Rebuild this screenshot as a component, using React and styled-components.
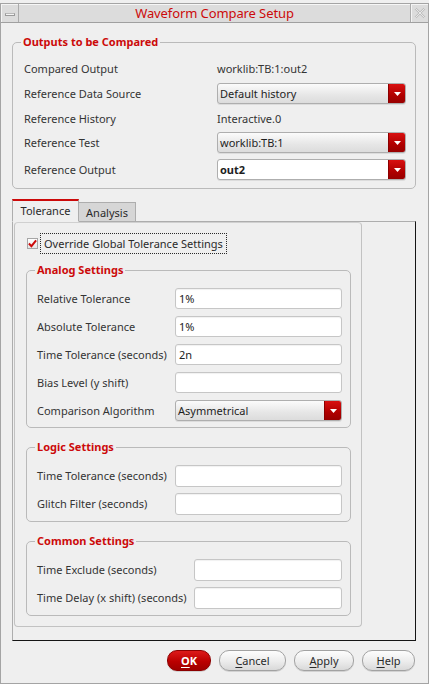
import React from "react";
import styled, { createGlobalStyle } from "styled-components";

const GlobalStyle = createGlobalStyle`
  html, body { margin: 0; padding: 0; background: #efefef; }
  body {
    font-family: "Noto Sans", "Open Sans", sans-serif;
    font-size: 11px;
    color: #343434;
  }
  * { box-sizing: border-box; }
`;

const RED = "#cc0a0a";

const Window = styled.div`
  width: 429px;
  height: 681px;
  margin-top: 3px;
  border: 1px solid #a4a4a4;
  background: #efefef;
  display: flex;
  flex-direction: column;
`;

const TitleBar = styled.div`
  height: 19px;
  display: flex;
  background: #dcdcdc;
  border-bottom: 1px solid #a0a0a0;
  box-shadow: inset 0 1px 0 #f6f6f6;
`;

const TitleButton = styled.div`
  width: 18px;
  flex: none;
  display: flex;
  align-items: center;
  justify-content: center;
  border-right: ${(p) => (p.$side === "left" ? "1px solid #ababab" : "none")};
  border-left: ${(p) => (p.$side === "right" ? "1px solid #ababab" : "none")};
  box-shadow: inset 1px 1px 0 #f4f4f4;
`;

const MinBar = styled.div`
  width: 10px;
  height: 3px;
  margin-top: 2px;
  background: #f4f4f4;
  border: 1px solid #9a9a9a;
  border-top-color: #b8b8b8;
`;

const TitleText = styled.div`
  flex: 1;
  text-align: center;
  color: ${RED};
  font-size: 13px;
  letter-spacing: -0.1px;
  line-height: 19px;
`;

const Body = styled.div`
  flex: 1;
  display: flex;
  flex-direction: column;
  padding: 19px 12px 0 11px;
`;

const Group = styled.div`
  position: relative;
  border: 1px solid #bababa;
  border-radius: 5px;
  margin-top: ${(p) => p.$mt || 0}px;
  padding: ${(p) => p.$pt ?? 15}px ${(p) => p.$pr ?? 8}px
    ${(p) => p.$pb ?? 6}px ${(p) => p.$pl ?? 10}px;
  display: flex;
  flex-direction: column;
  gap: ${(p) => p.$gap ?? 0}px;
`;

const Legend = styled.div`
  position: absolute;
  top: -9px;
  left: 8px;
  padding: 0 2px;
  background: #efefef;
  color: ${RED};
  font-weight: 700;
  font-size: 11px;
  line-height: 16px;
`;

const Row = styled.div`
  display: grid;
  grid-template-columns: ${(p) => p.$label}px 1fr;
  align-items: center;
  height: ${(p) => p.$h || 21}px;
  margin-top: ${(p) => p.$mt || 0}px;
`;

const Label = styled.span`
  white-space: nowrap;
  line-height: 14px;
`;

const Value = styled.span`
  white-space: nowrap;
`;

const Input = styled.div`
  height: 100%;
  background: #ffffff;
  border: 1px solid #c6c6c6;
  border-radius: 3px;
  box-shadow: inset 0 1px 1px rgba(0, 0, 0, 0.06);
  padding-left: 3px;
  display: flex;
  align-items: center;
  color: #222;
`;

const Select = styled.div`
  height: 100%;
  display: flex;
  border: 1px solid #aeaeae;
  border-radius: 3px;
  overflow: hidden;
  background: ${(p) =>
    p.$editable ? "#ffffff" : "linear-gradient(#fbfbfb, #e6e6e6 60%, #dcdcdc)"};
  box-shadow: 0 1px 0 rgba(0, 0, 0, 0.08);
`;

const SelectText = styled.div`
  flex: 1;
  display: flex;
  align-items: center;
  padding-left: 2px;
  font-weight: ${(p) => (p.$bold ? 700 : 400)};
  color: #1e1e1e;
`;

const SelectArrow = styled.div`
  width: 17px;
  flex: none;
  display: flex;
  align-items: center;
  justify-content: center;
  background: linear-gradient(#d81010, #b00000 60%, #980000);
  border-left: 1px solid #8a0000;
`;

const TabBar = styled.div`
  display: flex;
  align-items: flex-end;
  margin-top: 9px;
  height: 23px;
  position: relative;
  z-index: 1;
`;

const Tab = styled.div`
  height: ${(p) => (p.$active ? 23 : 20)}px;
  width: ${(p) => p.$w}px;
  display: flex;
  align-items: center;
  justify-content: center;
  background: ${(p) => (p.$active ? "#efefef" : "#d6d6d6")};
  border: 1px solid #adadad;
  border-top: ${(p) => (p.$active ? `2px solid ${RED}` : "1px solid #adadad")};
  border-bottom: ${(p) => (p.$active ? "1px solid #efefef" : "1px solid #adadad")};
  border-left-width: ${(p) => (p.$active ? 1 : 0)}px;
  color: #2a2a2a;
  font-size: 11px;
  padding-bottom: ${(p) => (p.$active ? 1 : 0)}px;
  margin-bottom: -1px;
`;

const TabFrame = styled.div`
  height: 420px;
  border-top: 1px solid #adadad;
  border-left: 1px solid #adadad;
  border-right: 1px solid #151515;
  border-bottom: 1px solid #151515;
  padding-left: 1px;
`;

const TabPage = styled.div`
  width: 348px;
  border: 1px solid #c2c2c2;
  border-top-color: #d0d0d0;
  border-radius: 4px;
  padding: 10px 10px 10px 11px;
  display: flex;
  flex-direction: column;
`;

const CheckRow = styled.div`
  display: flex;
  align-items: center;
  height: 21px;
  margin-left: 1px;
`;

const CheckBox = styled.div`
  width: 11px;
  height: 11px;
  border: 1px solid #a6a6a6;
  background: linear-gradient(#ffffff, #e4e4e4);
  display: flex;
  align-items: center;
  justify-content: center;
`;

const FocusLabel = styled.div`
  margin-left: 2px;
  height: 21px;
  display: flex;
  align-items: center;
  padding: 0 3px;
  border: 1px dotted #2a2a2a;
  color: #2a2a2a;
`;

const ButtonBar = styled.div`
  display: flex;
  justify-content: flex-end;
  gap: 8px;
  margin-top: 9px;
  margin-right: 1px;
`;

const Button = styled.div`
  height: 21px;
  width: ${(p) => p.$w}px;
  border-radius: 10px;
  display: flex;
  align-items: center;
  justify-content: center;
  font-size: 11px;
  border: 1px solid ${(p) => (p.$primary ? "#8c0000" : "#a2a2a2")};
  background: ${(p) =>
    p.$primary
      ? "linear-gradient(#dd1a1a, #bb0000 55%, #9e0000)"
      : "linear-gradient(#fdfdfd, #ececec 55%, #d9d9d9)"};
  color: ${(p) => (p.$primary ? "#ffffff" : "#2a2a2a")};
  font-weight: ${(p) => (p.$primary ? 700 : 400)};
  box-shadow: 0 1px 0 rgba(0, 0, 0, 0.12);
`;

const U = styled.span`
  text-decoration: underline;
  text-underline-offset: 2px;
`;

const Arrow = () => (
  <svg width="7" height="4" viewBox="0 0 7 4">
    <path d="M0 0 H7 L3.5 4 Z" fill="#ffffff" />
  </svg>
);

const Dropdown = ({ text, bold, editable }) => (
  <Select $editable={editable}>
    <SelectText $bold={bold}>{text}</SelectText>
    <SelectArrow>
      <Arrow />
    </SelectArrow>
  </Select>
);

export default function App() {
  return (
    <>
      <GlobalStyle />
      <Window>
        <TitleBar>
          <TitleButton $side="left">
            <MinBar />
          </TitleButton>
          <TitleText>Waveform Compare Setup</TitleText>
          <TitleButton $side="right">
            <svg width="12" height="12" viewBox="0 0 12 12">
              <path
                d="M1.5 1.5 L10.5 10.5 M10.5 1.5 L1.5 10.5"
                stroke="#bdbdbd"
                strokeWidth="2.4"
                fill="none"
              />
              <path
                d="M1.5 1.5 L10.5 10.5 M10.5 1.5 L1.5 10.5"
                stroke="#f2f2f2"
                strokeWidth="0.8"
                fill="none"
              />
            </svg>
          </TitleButton>
        </TitleBar>
        <Body>
          <Group $mt={0} $pl={11} $pr={9} $pb={8}>
            <Legend>Outputs to be Compared</Legend>
            <Row $label={193}>
              <Label>Compared Output</Label>
              <Value>worklib:TB:1:out2</Value>
            </Row>
            <Row $label={193} $mt={4}>
              <Label>Reference Data Source</Label>
              <Dropdown text="Default history" />
            </Row>
            <Row $label={193} $mt={4}>
              <Label>Reference History</Label>
              <Value>Interactive.0</Value>
            </Row>
            <Row $label={193} $mt={3}>
              <Label>Reference Test</Label>
              <Dropdown text="worklib:TB:1" />
            </Row>
            <Row $label={193} $mt={6}>
              <Label>Reference Output</Label>
              <Dropdown text="out2" bold editable />
            </Row>
          </Group>

          <TabBar>
            <Tab $active $w={67}>Tolerance</Tab>
            <Tab $w={57}>Analysis</Tab>
          </TabBar>
          <TabFrame>
            <TabPage>
              <CheckRow>
                <CheckBox>
                  <svg width="10" height="9" viewBox="0 0 10 9">
                    <path
                      d="M1 4.5 L3.8 7.5 L9 1"
                      stroke={RED}
                      strokeWidth="2.2"
                      fill="none"
                    />
                  </svg>
                </CheckBox>
                <FocusLabel>Override Global Tolerance Settings</FocusLabel>
              </CheckRow>

              <Group $mt={16} $gap={7} $pt={17}>
                <Legend>Analog Settings</Legend>
                <Row $label={138}>
                  <Label>Relative Tolerance</Label>
                  <Input>1%</Input>
                </Row>
                <Row $label={138}>
                  <Label>Absolute Tolerance</Label>
                  <Input>1%</Input>
                </Row>
                <Row $label={138}>
                  <Label>Time Tolerance (seconds)</Label>
                  <Input>2n</Input>
                </Row>
                <Row $label={138}>
                  <Label>Bias Level (y shift)</Label>
                  <Input />
                </Row>
                <Row $label={138}>
                  <Label>Comparison Algorithm</Label>
                  <Dropdown text="Asymmetrical" />
                </Row>
              </Group>

              <Group $mt={19} $gap={6} $pt={17}>
                <Legend>Logic Settings</Legend>
                <Row $label={138} $h={22}>
                  <Label>Time Tolerance (seconds)</Label>
                  <Input />
                </Row>
                <Row $label={138} $h={22}>
                  <Label>Glitch Filter (seconds)</Label>
                  <Input />
                </Row>
              </Group>

              <Group $mt={19} $gap={6} $pt={17}>
                <Legend>Common Settings</Legend>
                <Row $label={157} $h={22}>
                  <Label>Time Exclude (seconds)</Label>
                  <Input />
                </Row>
                <Row $label={157} $h={22}>
                  <Label>Time Delay (x shift) (seconds)</Label>
                  <Input />
                </Row>
              </Group>
            </TabPage>
          </TabFrame>

          <ButtonBar>
            <Button $primary $w={44}>
              <U>O</U>K
            </Button>
            <Button $w={67}>
              <U>C</U>ancel
            </Button>
            <Button $w={60}>
              <U>A</U>pply
            </Button>
            <Button $w={53}>
              <U>H</U>elp
            </Button>
          </ButtonBar>
        </Body>
      </Window>
    </>
  );
}
